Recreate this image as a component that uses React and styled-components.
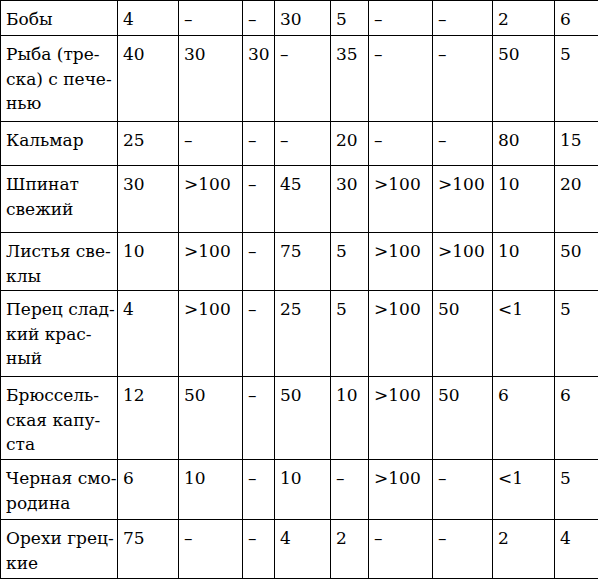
import React from 'react'
import styled, { createGlobalStyle } from 'styled-components'

const GlobalStyle = createGlobalStyle`
  html, body {
    margin: 0;
    padding: 0;
    background: #fff;
  }
`

const Table = styled.table`
  border-collapse: collapse;
  table-layout: fixed;
  width: 598px;
  font-family: 'DejaVu Serif', 'Liberation Serif', serif;
  font-size: 17px;
  line-height: 24.5px;
  color: #000;
`

const Row = styled.tr`
  height: ${(p) => p.$h}px;
`

const Cell = styled.td`
  border: 1.5px solid #000;
  padding: 6px 0 0 5px;
  vertical-align: top;
  white-space: nowrap;
  overflow: hidden;
`

const widths = [117, 61, 64, 32, 56, 38, 64, 60, 62, 44]

const rows = [
  { h: 35, name: ['Бобы'], v: ['4', '–', '–', '30', '5', '–', '–', '2', '6'] },
  { h: 86, name: ['Рыба (тре-', 'ска) с пече-', 'нью'], v: ['40', '30', '30', '–', '35', '–', '–', '50', '5'] },
  { h: 44, name: ['Кальмар'], v: ['25', '–', '–', '–', '20', '–', '–', '80', '15'] },
  { h: 67, name: ['Шпинат', 'свежий'], v: ['30', '>100', '–', '45', '30', '>100', '>100', '10', '20'] },
  { h: 58, name: ['Листья све-', 'клы'], v: ['10', '>100', '–', '75', '5', '>100', '>100', '10', '50'] },
  { h: 86, name: ['Перец слад-', 'кий крас-', 'ный'], v: ['4', '>100', '–', '25', '5', '>100', '50', '<1', '5'] },
  { h: 83, name: ['Брюссель-', 'ская капу-', 'ста'], v: ['12', '50', '–', '50', '10', '>100', '50', '6', '6'] },
  { h: 60, name: ['Черная смо-', 'родина'], v: ['6', '10', '–', '10', '–', '>100', '–', '<1', '5'] },
  { h: 59, name: ['Орехи грец-', 'кие'], v: ['75', '–', '–', '4', '2', '–', '–', '2', '4'] },
]

const App = () => {
  return (
    <>
      <GlobalStyle />
      <Table>
        <colgroup>
          {widths.map((w, i) => (
            <col key={i} style={{ width: w }} />
          ))}
        </colgroup>
        <tbody>
          {rows.map((r, i) => (
            <Row key={i} $h={r.h}>
              <Cell>
                {r.name.map((line, j) => (
                  <React.Fragment key={j}>
                    {j > 0 && <br />}
                    {line}
                  </React.Fragment>
                ))}
              </Cell>
              {r.v.map((val, j) => (
                <Cell key={j}>{val}</Cell>
              ))}
            </Row>
          ))}
        </tbody>
      </Table>
    </>
  )
}

export default App
